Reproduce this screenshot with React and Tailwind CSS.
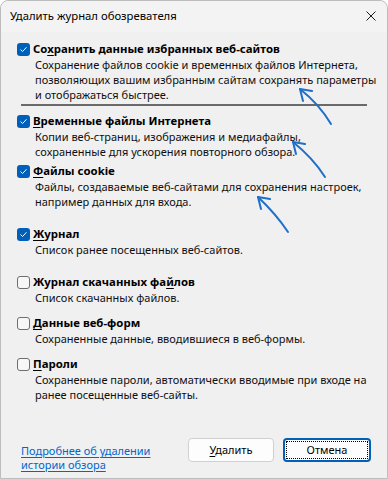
import React from "react";

const font = { fontFamily: '"Segoe UI", "Noto Sans", "Open Sans", sans-serif' };

function Box({ checked }) {
  if (checked) {
    return (
      <div className="w-[13px] h-[13px] rounded-[3px] bg-[#005fb8] flex items-center justify-center shrink-0">
        <svg width="9" height="9" viewBox="0 0 9 9">
          <path d="M1.8 4.8 L3.6 6.5 L7.2 2.6" fill="none" stroke="#fff" strokeWidth="1" strokeLinecap="round" strokeLinejoin="round" />
        </svg>
      </div>
    );
  }
  return <div className="w-[13px] h-[13px] rounded-[3px] border border-[#6e6e6e] bg-[#f7f7f7] shrink-0" />;
}

function Item({ checked, label, desc, className = "" }) {
  return (
    <div className={"flex flex-col shrink-0 " + className}>
      <div className="flex items-center h-[16px] pl-[16px]">
        <Box checked={checked} />
        <div className="ml-[3px] font-bold text-[11.4px] leading-[16px] text-black whitespace-nowrap">{label}</div>
      </div>
      <div className="pl-[34px] text-[11px] leading-[15px] text-[#0f0f0f] whitespace-nowrap">
        {desc.map((l, i) => (
          <div key={i}>{l}</div>
        ))}
      </div>
    </div>
  );
}

const U = ({ children }) => <span className="underline underline-offset-2">{children}</span>;

export default function App() {
  return (
    <div className="w-[388px] h-[479px] bg-white relative overflow-hidden" style={font}>
      <div className="w-full h-full rounded-t-[8px] border border-[#bdbdbd] bg-[#f0f0f0] flex flex-col">
        <div className="h-[31px] shrink-0 bg-[#f3f3f3] rounded-t-[8px] flex items-center justify-between pl-[9px] pr-[9px]">
          <div className="text-[11.3px] text-black whitespace-nowrap">Удалить журнал обозревателя</div>
          <svg width="12" height="12" viewBox="0 0 12 12" className="mr-[1px] -mt-[1px]">
            <path d="M1.5 1.5 L10.5 10.5 M10.5 1.5 L1.5 10.5" stroke="#1a1a1a" strokeWidth="1" />
          </svg>
        </div>

        <Item
          className="mt-[9px]"
          checked
          label={<>Со<U>х</U>ранить данные избранных веб-сайтов</>}
          desc={[
            "Сохранение файлов cookie и временных файлов Интернета,",
            "позволяющих вашим избранным сайтам сохранять параметры",
            "и отображаться быстрее.",
          ]}
        />
        <div className="mx-[20px] mt-[2px] h-[2px] shrink-0 bg-[#6a6a6a]" />
        <Item
          className="mt-[7px]"
          checked
          label={<><U>В</U>ременные файлы Интернета</>}
          desc={["Копии веб-страниц, изображения и медиафайлы,", "сохраненные для ускорения повторного обзора."]}
        />
        <Item
          className="mt-[4px]"
          checked
          label={<><U>Ф</U>айлы cookie</>}
          desc={["Файлы, создаваемые веб-сайтами для сохранения настроек,", "например данных для входа."]}
        />
        <Item
          className="mt-[17px]"
          checked
          label={<><U>Ж</U>урнал</>}
          desc={["Список ранее посещенных веб-сайтов."]}
        />
        <Item
          className="mt-[17px]"
          label={<>Журнал скачанных фа<U>й</U>лов</>}
          desc={["Список скачанных файлов."]}
        />
        <Item
          className="mt-[10px]"
          label={<><U>Д</U>анные веб-форм</>}
          desc={["Сохраненные данные, вводившиеся в веб-формы."]}
        />
        <Item
          className="mt-[10px]"
          label={<><U>П</U>ароли</>}
          desc={["Сохраненные пароли, автоматически вводимые при входе на", "ранее посещенные веб-сайты."]}
        />

        <div className="mt-auto mb-[6px] shrink-0 flex items-end justify-between pl-[20px] pr-[16px]">
          <div className="text-[11px] leading-[14px] text-[#0066cc] underline underline-offset-2 whitespace-nowrap">
            <div>Подробнее об удалении</div>
            <div>истории обзора</div>
          </div>
          <div className="flex gap-[9px] mb-[10px]">
            <button className="w-[86px] h-[24px] rounded-[4px] border border-[#d0d0d0] bg-[#fdfdfd] text-[11px] text-black">
              <U>У</U>далить
            </button>
            <button className="w-[88px] h-[24px] rounded-[4px] border-2 border-[#005fb8] bg-[#fdfdfd] text-[11px] text-black p-[1px]">
              <div className="w-full h-full border border-dotted border-black flex items-center justify-center">Отмена</div>
            </button>
          </div>
        </div>
      </div>

      <svg className="absolute left-0 top-0 pointer-events-none" width="388" height="479" viewBox="0 0 388 479">
        <g fill="none" stroke="#1f6fc9" strokeWidth="2" strokeLinecap="round" strokeLinejoin="round">
          <path d="M331 124 Q319 104 300 89" />
          <path d="M300 89 L312 91 M300 89 L303 101" />
          <path d="M325 177 Q313 158 293 142" />
          <path d="M293 142 L305 144 M293 142 L296 154" />
          <path d="M288 232 Q276 214 258 197" />
          <path d="M258 197 L270 199 M258 197 L261 209" />
        </g>
      </svg>
    </div>
  );
}
